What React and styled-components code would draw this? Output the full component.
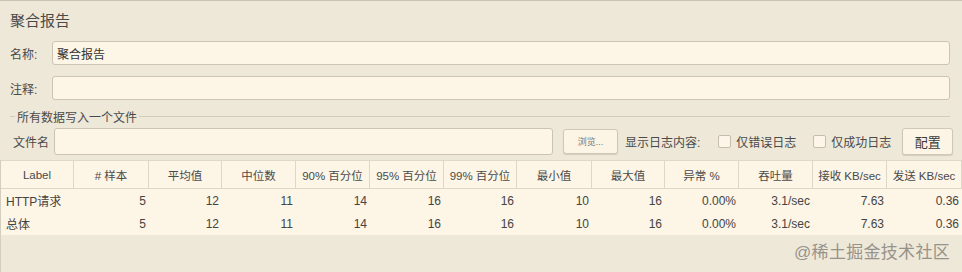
import styled, { createGlobalStyle } from 'styled-components'

const GlobalStyle = createGlobalStyle`
    html, body {
        margin: 0;
        padding: 0;
        background: #EEE8D9;
    }
    * {
        box-sizing: border-box;
    }
`

const FONT = `"Liberation Sans", "Noto Sans CJK SC", sans-serif`

const Panel = styled.div`
    position: relative;
    width: 962px;
    height: 272px;
    background: #EEE8D9;
    border-top: 1px solid #C9C3B5;
    font-family: ${FONT};
    color: #464646;
    overflow: hidden;
`

const Title = styled.div`
    padding: 10px 0 0 10px;
    height: 40px;
    font-size: 15px;
    line-height: 20px;
    color: #4a4a4a;
`

const FormRow = styled.div`
    display: flex;
    align-items: center;
    padding: 0 12px 0 10px;
    height: 24px;
    margin-bottom: ${p => p.gap || 0}px;
`

const Label = styled.div`
    width: ${p => p.w}px;
    flex: none;
    font-size: 12px;
    color: #4a4a4a;
`

const Input = styled.div`
    flex: ${p => (p.w ? 'none' : 1)};
    width: ${p => (p.w ? `${p.w}px` : 'auto')};
    height: ${p => p.h || 24}px;
    background: #FDF5E6;
    border: 1px solid #CBC4B4;
    border-radius: 3px;
    padding: 0 4px;
    display: flex;
    align-items: center;
    font-size: 12px;
    color: #333;
`

const Fieldset = styled.div`
    margin: 8px 12px 0 10px;
    position: relative;
`

const LegendLine = styled.div`
    display: flex;
    align-items: center;
    height: 16px;
    &::before {
        content: '';
        width: 5px;
        border-top: 1px solid #D2CCBE;
    }
    &::after {
        content: '';
        flex: 1;
        border-top: 1px solid #D2CCBE;
    }
`

const Legend = styled.span`
    font-size: 12px;
    padding: 0 2px;
    color: #4a4a4a;
`

const FileRow = styled.div`
    display: flex;
    align-items: center;
    height: 28px;
    margin-top: 3px;
    padding-left: 3px;
`

const Button = styled.div`
    flex: none;
    width: ${p => p.w}px;
    height: ${p => p.h}px;
    margin-left: ${p => p.ml || 0}px;
    background: #FCF5E6;
    border: 1px solid #CFC8B8;
    border-radius: 3px;
    box-shadow: 0 1px 1px rgba(0, 0, 0, 0.12);
    display: flex;
    align-items: center;
    justify-content: center;
    font-size: ${p => p.fs || 13}px;
    color: ${p => p.color || '#3a3a3a'};
`

const Caption = styled.span`
    font-size: 12px;
    margin-left: ${p => p.ml || 0}px;
    color: #4a4a4a;
    white-space: nowrap;
`

const Check = styled.span`
    flex: none;
    width: 13px;
    height: 13px;
    margin-left: ${p => p.ml || 0}px;
    margin-right: 5px;
    background: #FDF6E8;
    border: 1px solid #C5BEAE;
    border-radius: 2px;
`

const TableWrap = styled.div`
    margin-top: 5px;
    border-left: 1px solid #D4CEC0;
`

const Grid = styled.div`
    display: grid;
    grid-template-columns: 73px 75px 73px 74px 74px 74px 73px 75px 73px 74px 74px 74px 75px;
`

const HeadCell = styled.div`
    height: 29px;
    background: #FDF5E6;
    border-top: 1px solid #DED8C9;
    border-right: 1px solid #DDD7C8;
    border-bottom: 1px solid #DDD7C8;
    display: flex;
    align-items: center;
    justify-content: center;
    font-size: 11.5px;
    color: #4a4a4a;
    white-space: nowrap;
`

const Cell = styled.div`
    height: 23px;
    background: #FDF5E6;
    display: flex;
    align-items: center;
    justify-content: ${p => (p.left ? 'flex-start' : 'flex-end')};
    padding: 0 ${p => (p.left ? 0 : 3)}px 0 ${p => (p.left ? 5 : 0)}px;
    font-size: 12px;
    color: #444;
    white-space: nowrap;
`

const Empty = styled.div`
    height: 40px;
    border-left: 1px solid #D4CEC0;
`

const Watermark = styled.div`
    position: absolute;
    right: 12px;
    bottom: 9px;
    font-size: 17px;
    color: #97938b;
    letter-spacing: 0.3px;
`

const headers = ['Label', '# 样本', '平均值', '中位数', '90% 百分位', '95% 百分位', '99% 百分位', '最小值', '最大值', '异常 %', '吞吐量', '接收 KB/sec', '发送 KB/sec']

const rows = [
    ['HTTP请求', '5', '12', '11', '14', '16', '16', '10', '16', '0.00%', '3.1/sec', '7.63', '0.36'],
    ['总体', '5', '12', '11', '14', '16', '16', '10', '16', '0.00%', '3.1/sec', '7.63', '0.36'],
]

const App = () => {
    return (
        <>
            <GlobalStyle />
            <Panel>
                <Title>聚合报告</Title>
                <FormRow gap={11}>
                    <Label w={42}>名称:</Label>
                    <Input>聚合报告</Input>
                </FormRow>
                <FormRow>
                    <Label w={42}>注释:</Label>
                    <Input />
                </FormRow>
                <Fieldset>
                    <LegendLine>
                        <Legend>所有数据写入一个文件</Legend>
                    </LegendLine>
                    <FileRow>
                        <Label w={41}>文件名</Label>
                        <Input w={499} h={27} />
                        <Button w={55} h={25} ml={10} fs={9} color="#777">浏览...</Button>
                        <Caption ml={7}>显示日志内容:</Caption>
                        <Check ml={18} />
                        <Caption>仅错误日志</Caption>
                        <Check ml={17} />
                        <Caption>仅成功日志</Caption>
                        <Button w={51} h={27} ml={11}>配置</Button>
                    </FileRow>
                </Fieldset>
                <TableWrap>
                    <Grid>
                        {headers.map((h) => (
                            <HeadCell key={h}>{h}</HeadCell>
                        ))}
                        {rows.map((r, i) =>
                            r.map((v, j) => (
                                <Cell key={`${i}-${j}`} left={j === 0}>{v}</Cell>
                            ))
                        )}
                    </Grid>
                </TableWrap>
                <Empty />
                <Watermark>@稀土掘金技术社区</Watermark>
            </Panel>
        </>
    )
}

export default App
